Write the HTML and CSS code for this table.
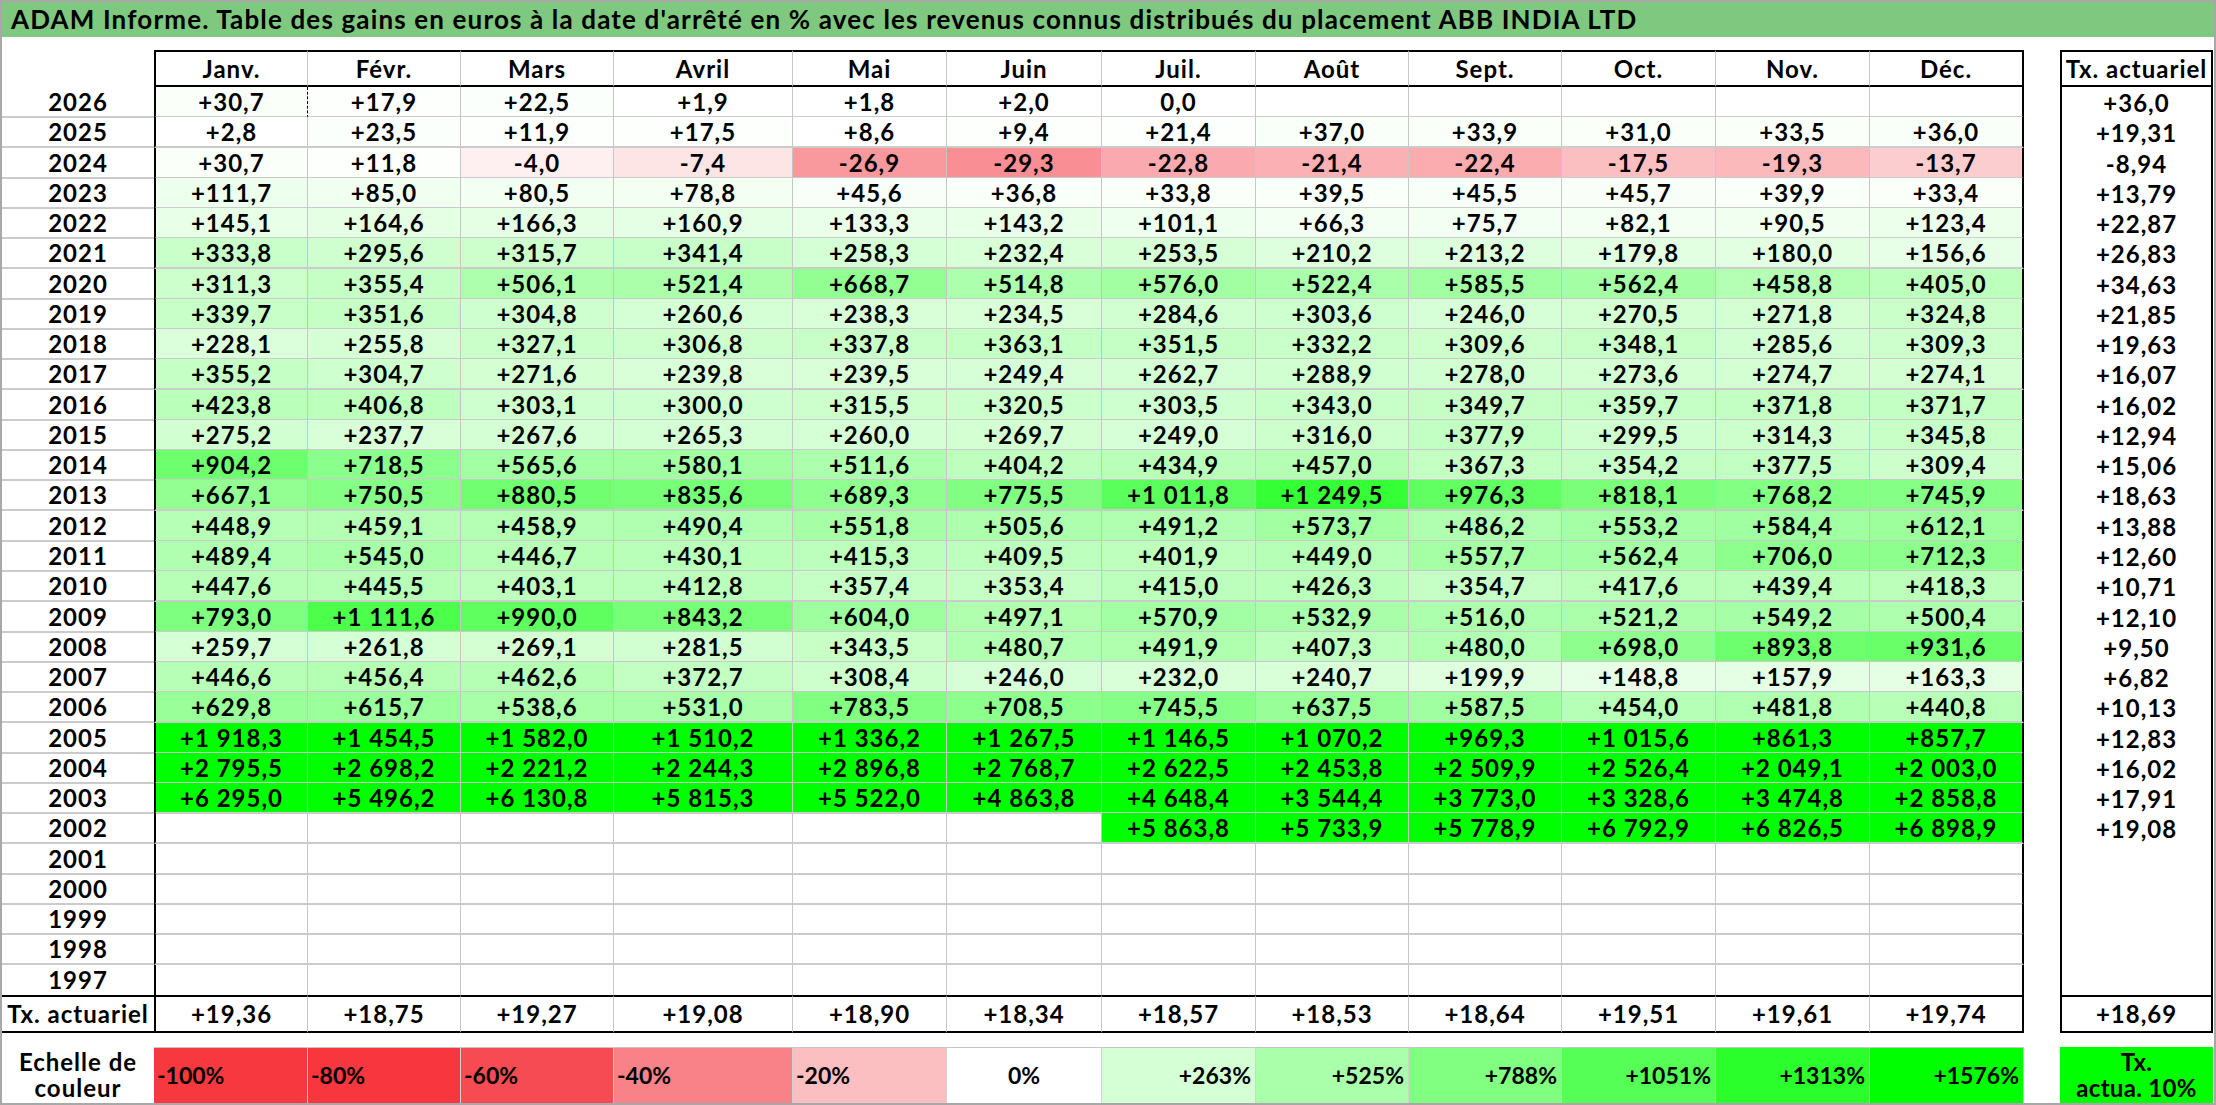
FILE: index.html
```html
<!DOCTYPE html>
<html lang="fr">
<head>
<meta charset="utf-8">
<title>ADAM Informe – ABB INDIA LTD</title>
<link rel="stylesheet" href="styles.css">
</head>
<body>
<div class="sheet">
  <div class="title">ADAM Informe. Table des gains en euros à la date d'arrêté en % avec les revenus connus distribués du placement ABB INDIA LTD</div>
  <div class="table">
    <div class="row head"><div></div><div>Janv.</div><div>Févr.</div><div>Mars</div><div>Avril</div><div>Mai</div><div>Juin</div><div>Juil.</div><div>Août</div><div>Sept.</div><div>Oct.</div><div>Nov.</div><div>Déc.</div><div>Tx. actuariel</div></div>
    <div class="body">
      <div class="row"><div>2026</div><div class="ants">+30,7</div><div>+17,9</div><div>+22,5</div><div>+1,9</div><div>+1,8</div><div>+2,0</div><div>0,0</div><div></div><div></div><div></div><div></div><div></div><div>+36,0</div></div>
      <div class="row"><div>2025</div><div>+2,8</div><div>+23,5</div><div>+11,9</div><div>+17,5</div><div>+8,6</div><div>+9,4</div><div>+21,4</div><div>+37,0</div><div>+33,9</div><div>+31,0</div><div>+33,5</div><div>+36,0</div><div>+19,31</div></div>
      <div class="row"><div>2024</div><div>+30,7</div><div>+11,8</div><div>-4,0</div><div>-7,4</div><div>-26,9</div><div>-29,3</div><div>-22,8</div><div>-21,4</div><div>-22,4</div><div>-17,5</div><div>-19,3</div><div>-13,7</div><div>-8,94</div></div>
      <div class="row"><div>2023</div><div>+111,7</div><div>+85,0</div><div>+80,5</div><div>+78,8</div><div>+45,6</div><div>+36,8</div><div>+33,8</div><div>+39,5</div><div>+45,5</div><div>+45,7</div><div>+39,9</div><div>+33,4</div><div>+13,79</div></div>
      <div class="row"><div>2022</div><div>+145,1</div><div>+164,6</div><div>+166,3</div><div>+160,9</div><div>+133,3</div><div>+143,2</div><div>+101,1</div><div>+66,3</div><div>+75,7</div><div>+82,1</div><div>+90,5</div><div>+123,4</div><div>+22,87</div></div>
      <div class="row"><div>2021</div><div>+333,8</div><div>+295,6</div><div>+315,7</div><div>+341,4</div><div>+258,3</div><div>+232,4</div><div>+253,5</div><div>+210,2</div><div>+213,2</div><div>+179,8</div><div>+180,0</div><div>+156,6</div><div>+26,83</div></div>
      <div class="row"><div>2020</div><div>+311,3</div><div>+355,4</div><div>+506,1</div><div>+521,4</div><div>+668,7</div><div>+514,8</div><div>+576,0</div><div>+522,4</div><div>+585,5</div><div>+562,4</div><div>+458,8</div><div>+405,0</div><div>+34,63</div></div>
      <div class="row"><div>2019</div><div>+339,7</div><div>+351,6</div><div>+304,8</div><div>+260,6</div><div>+238,3</div><div>+234,5</div><div>+284,6</div><div>+303,6</div><div>+246,0</div><div>+270,5</div><div>+271,8</div><div>+324,8</div><div>+21,85</div></div>
      <div class="row"><div>2018</div><div>+228,1</div><div>+255,8</div><div>+327,1</div><div>+306,8</div><div>+337,8</div><div>+363,1</div><div>+351,5</div><div>+332,2</div><div>+309,6</div><div>+348,1</div><div>+285,6</div><div>+309,3</div><div>+19,63</div></div>
      <div class="row"><div>2017</div><div>+355,2</div><div>+304,7</div><div>+271,6</div><div>+239,8</div><div>+239,5</div><div>+249,4</div><div>+262,7</div><div>+288,9</div><div>+278,0</div><div>+273,6</div><div>+274,7</div><div>+274,1</div><div>+16,07</div></div>
      <div class="row"><div>2016</div><div>+423,8</div><div>+406,8</div><div>+303,1</div><div>+300,0</div><div>+315,5</div><div>+320,5</div><div>+303,5</div><div>+343,0</div><div>+349,7</div><div>+359,7</div><div>+371,8</div><div>+371,7</div><div>+16,02</div></div>
      <div class="row"><div>2015</div><div>+275,2</div><div>+237,7</div><div>+267,6</div><div>+265,3</div><div>+260,0</div><div>+269,7</div><div>+249,0</div><div>+316,0</div><div>+377,9</div><div>+299,5</div><div>+314,3</div><div>+345,8</div><div>+12,94</div></div>
      <div class="row"><div>2014</div><div>+904,2</div><div>+718,5</div><div>+565,6</div><div>+580,1</div><div>+511,6</div><div>+404,2</div><div>+434,9</div><div>+457,0</div><div>+367,3</div><div>+354,2</div><div>+377,5</div><div>+309,4</div><div>+15,06</div></div>
      <div class="row"><div>2013</div><div>+667,1</div><div>+750,5</div><div>+880,5</div><div>+835,6</div><div>+689,3</div><div>+775,5</div><div>+1&#160;011,8</div><div>+1&#160;249,5</div><div>+976,3</div><div>+818,1</div><div>+768,2</div><div>+745,9</div><div>+18,63</div></div>
      <div class="row"><div>2012</div><div>+448,9</div><div>+459,1</div><div>+458,9</div><div>+490,4</div><div>+551,8</div><div>+505,6</div><div>+491,2</div><div>+573,7</div><div>+486,2</div><div>+553,2</div><div>+584,4</div><div>+612,1</div><div>+13,88</div></div>
      <div class="row"><div>2011</div><div>+489,4</div><div>+545,0</div><div>+446,7</div><div>+430,1</div><div>+415,3</div><div>+409,5</div><div>+401,9</div><div>+449,0</div><div>+557,7</div><div>+562,4</div><div>+706,0</div><div>+712,3</div><div>+12,60</div></div>
      <div class="row"><div>2010</div><div>+447,6</div><div>+445,5</div><div>+403,1</div><div>+412,8</div><div>+357,4</div><div>+353,4</div><div>+415,0</div><div>+426,3</div><div>+354,7</div><div>+417,6</div><div>+439,4</div><div>+418,3</div><div>+10,71</div></div>
      <div class="row"><div>2009</div><div>+793,0</div><div>+1&#160;111,6</div><div>+990,0</div><div>+843,2</div><div>+604,0</div><div>+497,1</div><div>+570,9</div><div>+532,9</div><div>+516,0</div><div>+521,2</div><div>+549,2</div><div>+500,4</div><div>+12,10</div></div>
      <div class="row"><div>2008</div><div>+259,7</div><div>+261,8</div><div>+269,1</div><div>+281,5</div><div>+343,5</div><div>+480,7</div><div>+491,9</div><div>+407,3</div><div>+480,0</div><div>+698,0</div><div>+893,8</div><div>+931,6</div><div>+9,50</div></div>
      <div class="row"><div>2007</div><div>+446,6</div><div>+456,4</div><div>+462,6</div><div>+372,7</div><div>+308,4</div><div>+246,0</div><div>+232,0</div><div>+240,7</div><div>+199,9</div><div>+148,8</div><div>+157,9</div><div>+163,3</div><div>+6,82</div></div>
      <div class="row"><div>2006</div><div>+629,8</div><div>+615,7</div><div>+538,6</div><div>+531,0</div><div>+783,5</div><div>+708,5</div><div>+745,5</div><div>+637,5</div><div>+587,5</div><div>+454,0</div><div>+481,8</div><div>+440,8</div><div>+10,13</div></div>
      <div class="row full"><div>2005</div><div>+1&#160;918,3</div><div>+1&#160;454,5</div><div>+1&#160;582,0</div><div>+1&#160;510,2</div><div>+1&#160;336,2</div><div>+1&#160;267,5</div><div>+1&#160;146,5</div><div>+1&#160;070,2</div><div>+969,3</div><div>+1&#160;015,6</div><div>+861,3</div><div>+857,7</div><div>+12,83</div></div>
      <div class="row full"><div>2004</div><div>+2&#160;795,5</div><div>+2&#160;698,2</div><div>+2&#160;221,2</div><div>+2&#160;244,3</div><div>+2&#160;896,8</div><div>+2&#160;768,7</div><div>+2&#160;622,5</div><div>+2&#160;453,8</div><div>+2&#160;509,9</div><div>+2&#160;526,4</div><div>+2&#160;049,1</div><div>+2&#160;003,0</div><div>+16,02</div></div>
      <div class="row full"><div>2003</div><div>+6&#160;295,0</div><div>+5&#160;496,2</div><div>+6&#160;130,8</div><div>+5&#160;815,3</div><div>+5&#160;522,0</div><div>+4&#160;863,8</div><div>+4&#160;648,4</div><div>+3&#160;544,4</div><div>+3&#160;773,0</div><div>+3&#160;328,6</div><div>+3&#160;474,8</div><div>+2&#160;858,8</div><div>+17,91</div></div>
      <div class="row full"><div>2002</div><div></div><div></div><div></div><div></div><div></div><div></div><div>+5&#160;863,8</div><div>+5&#160;733,9</div><div>+5&#160;778,9</div><div>+6&#160;792,9</div><div>+6&#160;826,5</div><div>+6&#160;898,9</div><div>+19,08</div></div>
      <div class="row"><div>2001</div><div></div><div></div><div></div><div></div><div></div><div></div><div></div><div></div><div></div><div></div><div></div><div></div><div></div></div>
      <div class="row"><div>2000</div><div></div><div></div><div></div><div></div><div></div><div></div><div></div><div></div><div></div><div></div><div></div><div></div><div></div></div>
      <div class="row"><div>1999</div><div></div><div></div><div></div><div></div><div></div><div></div><div></div><div></div><div></div><div></div><div></div><div></div><div></div></div>
      <div class="row"><div>1998</div><div></div><div></div><div></div><div></div><div></div><div></div><div></div><div></div><div></div><div></div><div></div><div></div><div></div></div>
      <div class="row"><div>1997</div><div></div><div></div><div></div><div></div><div></div><div></div><div></div><div></div><div></div><div></div><div></div><div></div><div></div></div>
    </div>
    <div class="row foot"><div>Tx. actuariel</div><div>+19,36</div><div>+18,75</div><div>+19,27</div><div>+19,08</div><div>+18,90</div><div>+18,34</div><div>+18,57</div><div>+18,53</div><div>+18,64</div><div>+19,51</div><div>+19,61</div><div>+19,74</div><div>+18,69</div></div>
    <div class="row scale"><div class="legend">Echelle de<br>couleur</div><div class="neg s1">-100%</div><div class="neg s2">-80%</div><div class="neg s3">-60%</div><div class="neg s4">-40%</div><div class="neg s5">-20%</div><div class="s6">0%</div><div class="pos s7">+263%</div><div class="pos s8">+525%</div><div class="pos s9">+788%</div><div class="pos s10">+1051%</div><div class="pos s11">+1313%</div><div class="pos s12">+1576%</div><div class="txkey">Tx.<br>actua. 10%</div></div>
  </div>
</div>
<script src="script.js"></script>
</body>
</html>
```

FILE: styles.css
```css
* { box-sizing: border-box; }
html, body { margin: 0; padding: 0; background: #fff; }
body {
  font-family: "Lato", "Liberation Sans", sans-serif;
  font-weight: 700;
  color: #000;
}
.sheet {
  width: 2216px;
  height: 1105px;
  border: 2px solid #a8a8a8;
  overflow: hidden;
  background: #fff;
}
.title {
  height: 35px;
  background: #7fc87f;
  font-size: 26px;
  letter-spacing: 1.15px;
  line-height: 35px;
  padding-left: 9px;
  white-space: nowrap;
}
.table { margin-top: 13px; }

.row {
  display: grid;
  grid-template-columns: 152px 154px 153px 153px 179px 154px 155px 154px 153px 153px 154px 154px 154px 36px 153px;
  height: 30.27px;
  font-size: 24px;
  letter-spacing: 1px;
}
.row > div {
  display: flex;
  align-items: center;
  justify-content: center;
  white-space: nowrap;
}
.row > div:last-child { grid-column: 15; }

/* header */
.head { height: 37px; }
.head > div:not(:first-child) {
  border-top: 2px solid #000;
  border-bottom: 2px solid #000;
  border-right: 1px solid #c8c8c8;
}
.head > div:nth-child(2) { border-left: 2px solid #000; }
.head > div:nth-child(13) { border-right: 2px solid #000; }
.head > div:last-child { border-left: 2px solid #000; border-right: 2px solid #000; }

/* body */
.body .row > div { border-bottom: 2px solid #cbcbcb; }
.body .row > div:not(:first-child) { border-right: 1px solid #c6c6c6; }
.body .row > div:nth-child(2) { border-left: 2px solid #000; }
.body .row > div:nth-child(13) { border-right: 2px solid #000; }
.body .row > div:last-child {
  border-bottom: 0;
  border-left: 2px solid #000;
  border-right: 2px solid #000;
}
.body .row:last-child > div { border-bottom: 0; }
.body .row > div.ants { border-right: 1px dashed #000; }

/* footer */
.foot { height: 38px; }
.foot > div { border-top: 2px solid #000; border-bottom: 2px solid #000; }
.foot > div:not(:first-child) { border-right: 1px solid #c6c6c6; }
.foot > div:nth-child(2) { border-left: 2px solid #000; }
.foot > div:nth-child(13) { border-right: 2px solid #000; }
.foot > div:last-child { border-left: 2px solid #000; border-right: 2px solid #000; }

/* colour scale */
.scale { height: 56px; margin-top: 14px; }
.scale > div:not(:first-child):not(:last-child) {
  border-top: 1px solid #c4c4c4;
  border-right: 1px solid #d2d2d2;
  font-size: 23px;
  letter-spacing: 0;
}
.scale .legend, .scale .txkey {
  text-align: center;
  line-height: 26px;
}
.scale .txkey { letter-spacing: 0.3px; }
.scale .neg { justify-content: flex-start; padding-left: 3px; }
.scale .pos { justify-content: flex-end; padding-right: 4px; }
.s1 { background: #f8383f; }
.s2 { background: #f7363e; }
.s3 { background: #f64b52; }
.s4 { background: #f88288; }
.s5 { background: #fbbec1; }
.s6 { background: #ffffff; }
.s7 { background: #d5ffd5; }
.s8 { background: #aaffaa; }
.s9 { background: #80ff80; }
.s10 { background: #55ff55; }
.s11 { background: #2bff2b; }
.s12 { background: #00ff00; }
.txkey { background: #00ff00; }
```

FILE: script.js
```js
(function () {
  var neg = [
    [0, [255, 255, 255]],
    [10, [252, 218, 220]],
    [20, [251, 182, 185]],
    [30, [249, 140, 145]],
    [40, [248, 128, 134]],
    [60, [246, 75, 82]],
    [80, [247, 54, 62]],
    [100, [248, 56, 63]]
  ];
  function colour(v, full) {
    if (v >= 0) {
      var t = full ? 1 : Math.min(v / 1576, 1);
      var c = Math.round(255 * (1 - t));
      return 'rgb(' + c + ',255,' + c + ')';
    }
    var a = Math.min(-v, 100);
    for (var i = 1; i < neg.length; i++) {
      if (a <= neg[i][0]) {
        var p = neg[i - 1], q = neg[i];
        var f = (a - p[0]) / (q[0] - p[0]);
        var rgb = [0, 1, 2].map(function (k) {
          return Math.round(p[1][k] + (q[1][k] - p[1][k]) * f);
        });
        return 'rgb(' + rgb.join(',') + ')';
      }
    }
    return '#fff';
  }
  var rows = document.querySelectorAll('.body .row');
  for (var r = 0; r < rows.length; r++) {
    var full = rows[r].classList.contains('full');
    var cells = rows[r].children;
    for (var i = 1; i <= 12; i++) {
      var s = cells[i].textContent.replace(/[\s+]/g, '').replace(',', '.');
      if (!s) continue;
      var v = parseFloat(s);
      if (isNaN(v)) continue;
      cells[i].style.backgroundColor = colour(v, full);
    }
  }
})();
```
